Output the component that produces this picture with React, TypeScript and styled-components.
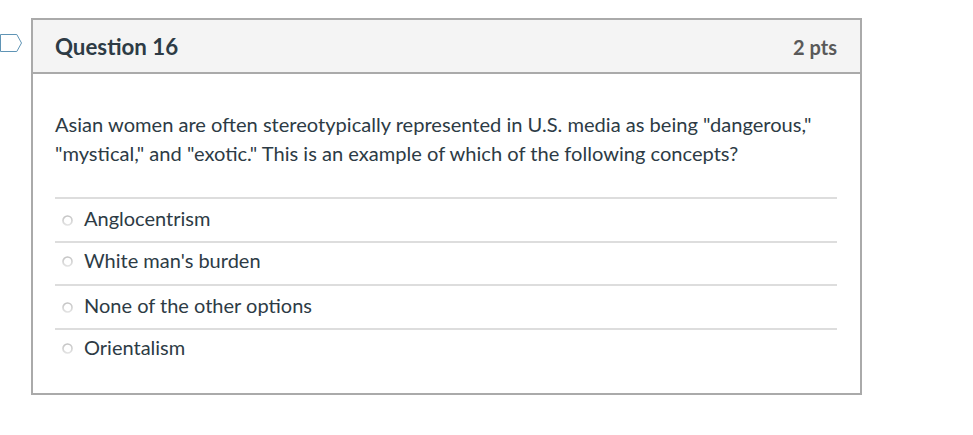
import React from 'react';
import styled, { createGlobalStyle } from 'styled-components';

const GlobalStyle = createGlobalStyle`
  * { box-sizing: border-box; }
  body { margin: 0; background: #fff; color: #2d3b45; font-family: Lato, sans-serif; }
`;
const Page = styled.main`
  display: flex;
  align-items: flex-start;
  width: 973px;
  height: 435px;
  padding-top: 18px;
`;
const Flag = styled.svg`
  flex: none;
  width: 22px;
  height: 20px;
  margin: 15px 9px 0 0;
`;
const Card = styled.section`
  width: 831px;
  height: 377px;
  border: 2px solid #aaa;
`;
const Header = styled.header`
  display: flex;
  justify-content: space-between;
  align-items: center;
  height: 54px;
  padding: 1px 23px 0 22px;
  background: #f4f4f4;
  border-bottom: 2px solid #aaa;
`;
const Title = styled.h2`
  margin: 0;
  font-size: 22.3px;
  line-height: 28px;
`;
const Points = styled.span`
  color: #595959;
  font-size: 20px;
  font-weight: 700;
`;
const Body = styled.div`
  padding: 36px 23px 0 22px;
`;
const Prompt = styled.p`
  margin: 0 0 29px;
  font-size: 20.08px;
  line-height: 29px;
  white-space: nowrap;
`;
const Answer = styled.label<{ $height: number; $lift: number }>`
  display: flex;
  align-items: center;
  height: ${(p) => p.$height}px;
  padding: 0 0 ${(p) => p.$lift}px 7px;
  gap: 11px;
  border-top: 2px solid #ddd;
  font-size: 20px;
`;
const Radio = styled.svg`
  width: 11px;
  height: 11px;
  margin-top: 4px;
`;

const answers = [
  { id: 'a', text: 'Anglocentrism', height: 44, lift: 4 },
  { id: 'b', text: "White man's burden", height: 43, lift: 8 },
  { id: 'c', text: 'None of the other options', height: 44, lift: 4 },
  { id: 'd', text: 'Orientalism', height: 43, lift: 8 },
];

export default function App() {
  return (
    <Page>
      <GlobalStyle />
      <Flag viewBox="0 0 22 20" fill="none">
        <path d="M0.5 1.5H16.8L21.5 10L16.8 18.5H0.5Z" stroke="#5f94b5" />
      </Flag>
      <Card>
        <Header>
          <Title>Question 16</Title>
          <Points>2 pts</Points>
        </Header>
        <Body>
          <Prompt>
            Asian women are often stereotypically represented in U.S. media as being "dangerous,"<br />
            "mystical," and "exotic." This is an example of which of the following concepts?
          </Prompt>
          {answers.map((a) => (
            <Answer key={a.id} $height={a.height} $lift={a.lift}>
              <Radio viewBox="0 0 11 11">
                <defs>
                  <linearGradient id={`ring-${a.id}`} x1="0" y1="0" x2="0" y2="1">
                    <stop offset="0" stopColor="#c4c4c4" />
                    <stop offset="1" stopColor="#e2e2e2" />
                  </linearGradient>
                </defs>
                <circle cx="5.5" cy="5.5" r="4.5" fill="#fff" stroke={`url(#ring-${a.id})`} strokeWidth="1.7" />
              </Radio>
              <span>{a.text}</span>
            </Answer>
          ))}
        </Body>
      </Card>
    </Page>
  );
}
